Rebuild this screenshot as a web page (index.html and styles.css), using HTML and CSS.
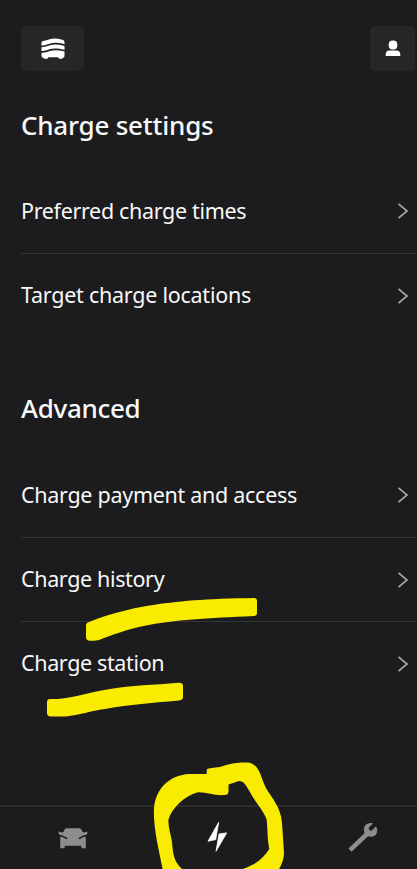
FILE: index.html
```html
<!DOCTYPE html>
<html lang="en">
<head>
<meta charset="utf-8">
<title>Charge settings</title>
<link rel="stylesheet" href="styles.css">
</head>
<body>
<div class="screen">
  <header class="topbar">
    <button class="tile tile-car" aria-label="Vehicles">
      <svg width="24" height="22" viewBox="0 0 24 22" fill="#fff"><path d="M.5 4.500Q.7 3.200 2 2.900Q6 2.200 8.500 1.200Q12 .2 17 .8L21.500 1.700Q23.500 2.200 23.500 4V18Q23.500 19.600 22 19.900Q20.800 21 19.400 21T17 19.300H7.500Q6.800 21 5.200 21T2.600 19.900Q.5 19.700.5 18Z"/><path d="M0 8.500Q5 8 9.500 6.200Q15 4.700 24 7.100M0 14.200Q5 13.700 9.500 11.900Q15 10.400 24 12.800" fill="none" stroke="#222224" stroke-width="1.700"/></svg>
    </button>
    <button class="tile tile-user" aria-label="Profile">
      <svg width="16" height="17" viewBox="0 0 16 17" fill="#fff"><rect x="3.700" y=".5" width="8.600" height="9" rx="4"/><path d="M.7 16V14Q.9 10.700 4.200 10.400H11.400Q15 10.700 15.300 14V16Z"/></svg>
    </button>
  </header>

  <main class="content">
    <section class="group">
      <h2 class="heading heading-charge">Charge settings</h2>
      <a class="row"><span class="label label-times">Preferred charge times</span><svg class="chevron" viewBox="0 0 12 18"><path d="M1.500 1.800 10 9 1.500 16.200"/></svg></a>
      <a class="row"><span class="label label-places">Target charge locations</span><svg class="chevron" viewBox="0 0 12 18"><path d="M1.500 1.800 10 9 1.500 16.200"/></svg></a>
    </section>
    <section class="group group-advanced">
      <h2 class="heading heading-advanced">Advanced</h2>
      <a class="row"><span class="label label-pay">Charge payment and access</span><svg class="chevron" viewBox="0 0 12 18"><path d="M1.500 1.800 10 9 1.500 16.200"/></svg></a>
      <a class="row"><span class="label label-history">Charge history</span><svg class="chevron" viewBox="0 0 12 18"><path d="M1.500 1.800 10 9 1.500 16.200"/></svg></a>
      <a class="row"><span class="label label-station">Charge station</span><svg class="chevron" viewBox="0 0 12 18"><path d="M1.500 1.800 10 9 1.500 16.200"/></svg></a>
    </section>
  </main>

  <nav class="tabs">
    <a class="tab tab-car" aria-label="Car">
      <svg width="30" height="22" viewBox="0 0 30 22" fill="#8d8d8f"><path d="M6.800 1.200Q7.500.2 9 .2H21Q22.500.2 23.200 1.200L24.800 4.300H27L29.300 3.400V6L26 7.900L27.800 9.600V20.300H23.300V17.700H6.700V20.300H2.200V9.600L4 7.900L.7 6V3.400L3 4.300H5.200Z"/><path d="M3.800 7.900 8.600 10.400M26.200 7.900 21.400 10.400" stroke="#1c1c1e" stroke-width="1.600" stroke-linecap="round"/></svg>
    </a>
    <a class="tab tab-charge" aria-label="Charge">
      <svg width="22" height="32" viewBox="0 0 22 32" fill="#fff" stroke="#fff" stroke-width=".8" stroke-linejoin="round"><path d="M11.700 1.300 1 20.200L8.700 18.600Z"/><path d="M12 12.900 19.700 11.900 9 30.300Z"/></svg>
    </a>
    <a class="tab tab-service" aria-label="Service">
      <svg width="32" height="30" viewBox="0 0 32 30"><path d="M2 28.200 18.500 12.500" stroke="#8d8d8f" stroke-width="4.500"/><path d="M23.900 1Q16 .5 15.900 8Q16 14.800 23 14.800Q29.400 14.200 29.300 7.400L28 4.300L23.600 8.800L21.200 7.900L20.700 5.500L25 1.400Z" fill="#8d8d8f"/></svg>
    </a>
  </nav>

  <svg class="marker" viewBox="0 0 417 869" fill="#f9ec00" aria-hidden="true">
    <path d="M86 625.500Q86 623 89 622C112 613 130 609 148 605.800C178 601 205 598.700 254 598Q257 598 257 601V613Q257 615.500 254 616C207 618 174 620 146 625.500C126 629.500 112 635 99 640Q97 640.800 90 640.700Q86 640.500 86 637Z"/>
    <path d="M47 702Q47 699.200 50 699H58C75 697.500 91 692 110 689C132 685.500 153 685 179 682.800Q183 682.700 183 686V697Q183 700 179 700.500C150 703 127 705 105 709C91 711 79 715 66 716.500H51Q47 716.500 47 713Z"/>
    <path fill-rule="evenodd" d="M163 871C159 850 153 828 154 808C156 787 171 775 189 774H206.500L207 769Q210 767.800 220 767C230 763 240 762 248 762.500C260 764 261 779 266 788C271 797 281 807 282 823L284 853Q284 861 278 871ZM182 871H236C254 866 262 860 269.300 849C267 837 268 831 266.500 819C263 810 256 803 251 794C246 785 244 781 239 781L228.500 784.500V792Q228 795 225 795C215 796 207 792 198 792.300C184 796 172 808 168.300 820C168.300 828 171 835 172 842C173 854 174 862 182 869Z"/>
  </svg>
</div>
</body>
</html>
```
FILE: styles.css
```css
* {
  box-sizing: border-box;
}

body {
  margin: 0;
  background: #1c1c1e;
  color: #f8f8f8;
  font-family: "Noto Sans", sans-serif;
}

.screen {
  position: relative;
  display: flex;
  flex-direction: column;
  width: 417px;
  height: 869px;
  overflow: hidden;
}

.topbar {
  display: flex;
  justify-content: space-between;
  padding: 26px 2px 0 21px;
}

.tile {
  display: flex;
  align-items: center;
  justify-content: center;
  height: 45px;
  padding: 0;
  border: 0;
  border-radius: 5px;
  background: #262628;
}

.tile-car {
  width: 63px;
}

.tile-user {
  width: 45px;
}

.content {
  flex: 1;
  padding: 0 2px 0 21px;
}

.heading {
  height: 98px;
  margin: 0;
  padding-top: 39px;
  font-size: 26px;
  font-weight: 500;
  line-height: 30px;
  letter-spacing: -0.220px;
  white-space: nowrap;
}

.heading-advanced {
  height: 116px;
  padding-top: 56px;
  letter-spacing: -0.300px;
}

.row {
  display: flex;
  align-items: center;
  justify-content: space-between;
  height: 84px;
  font-size: 21.500px;
  white-space: nowrap;
}

.row + .row {
  border-top: 1px solid #353537;
}

.label {
  padding-bottom: 2px;
}

.label-times {
  letter-spacing: -0.330px;
}

.label-places {
  letter-spacing: -0.250px;
}

.label-pay {
  letter-spacing: -0.290px;
}

.label-history,
.label-station {
  letter-spacing: -0.360px;
}

.chevron {
  width: 12px;
  height: 18px;
  margin-right: 6px;
  fill: none;
  stroke: #a6a6a8;
  stroke-width: 1.700;
}

.tabs {
  display: flex;
  align-items: flex-start;
  justify-content: space-between;
  height: 64px;
  padding: 0 37px 0 58px;
  border-top: 2px solid #2c2c2e;
}

.tab-car {
  padding-top: 21px;
}

.tab-charge {
  padding-top: 14px;
}

.tab-service {
  padding-top: 15px;
}

.tab svg {
  display: block;
}

.marker {
  position: absolute;
  inset: 0;
  width: 417px;
  height: 869px;
  pointer-events: none;
}
```
